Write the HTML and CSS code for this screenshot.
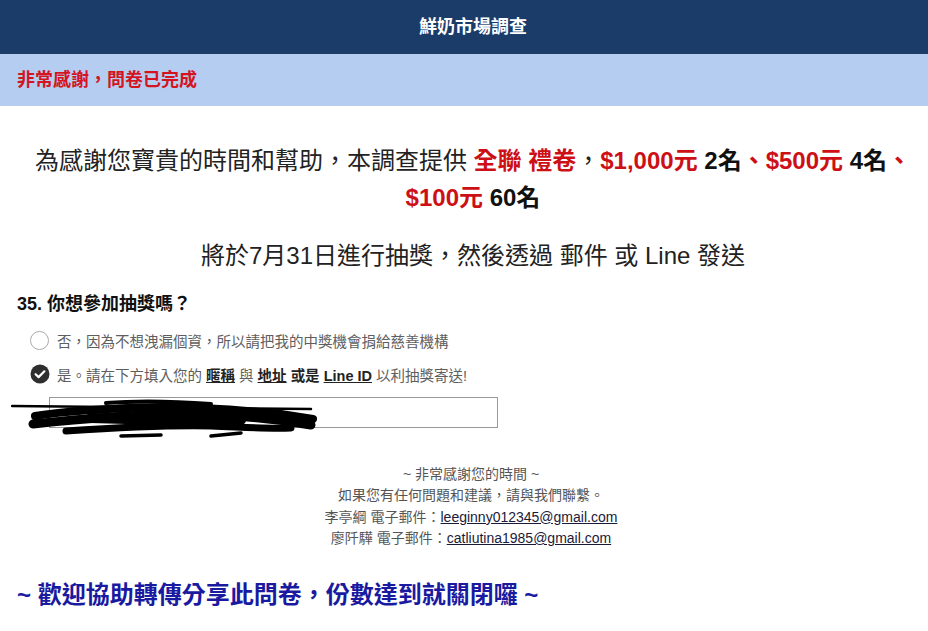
FILE: index.html
```html
<!DOCTYPE html>
<html lang="zh-TW">
<head>
    <meta charset="UTF-8">
    <meta name="viewport" content="width=device-width, initial-scale=1.0">
    <title>鮮奶市場調查</title>
    <link rel="stylesheet" href="styles.css">
</head>
<body>

    <div class="top-bar">鮮奶市場調查</div>

    <div class="done-banner">非常感謝，問卷已完成</div>

    <div class="intro">
        <p class="intro-line">為感謝您寶貴的時間和幫助，本調查提供 <b class="red">全聯 禮卷</b>，<b class="red">$1,000元</b> <b>2名</b><b class="red">、$500元</b> <b>4名</b><b class="red">、</b><br><b class="red">$100元</b> <b>60名</b></p>
        <p class="intro-line second">將於7月31日進行抽獎，然後透過 郵件 或 Line 發送</p>
    </div>

    <div class="question">
        <div class="question-title">35. 你想參加抽獎嗎？</div>

        <div class="option">
            <span class="radio"></span>
            <span>否，因為不想洩漏個資，所以請把我的中獎機會捐給慈善機構</span>
        </div>

        <div class="option">
            <svg class="radio-checked" width="20" height="20" viewBox="0 0 20 20">
                <circle cx="10" cy="10" r="9.5" fill="#2f2f2f"/>
                <path d="M5.6 10.2 L8.6 13.1 L14.4 7.3" fill="none" stroke="#fff" stroke-width="2.2" stroke-linecap="round" stroke-linejoin="round"/>
            </svg>
            <span>是。請在下方填入您的 <b class="mark">暱稱</b> 與 <b class="mark">地址</b> <b>或是</b> <b class="mark">Line ID</b> 以利抽獎寄送!</span>
        </div>

        <div class="answer-wrap">
            <input class="answer" type="text">
            <svg class="scribble" width="310" height="42" viewBox="0 0 310 42">
                <path d="M1 8 L300 11" stroke="#000" stroke-width="2.5" fill="none" stroke-linecap="round"/>
                <path d="M24 18 C60 12 110 10 150 9 C190 9 230 12 270 16 L302 21" stroke="#000" stroke-width="8" fill="none" stroke-linecap="round"/>
                <path d="M22 26 C60 22 110 17 160 16 C210 16 260 20 300 27" stroke="#000" stroke-width="9" fill="none" stroke-linecap="round"/>
                <path d="M55 33 C100 30 150 27 200 28 C230 29 255 31 280 30" stroke="#000" stroke-width="7" fill="none" stroke-linecap="round"/>
                <path d="M95 5 C120 3 160 3 200 6" stroke="#000" stroke-width="4" fill="none" stroke-linecap="round"/>
                <path d="M110 38 L150 37 M200 38 L230 35" stroke="#000" stroke-width="3.5" fill="none" stroke-linecap="round"/>
                <path d="M80 20 L150 22 L230 22" stroke="#000" stroke-width="10" fill="none" stroke-linecap="round"/>
            </svg>
        </div>
    </div>

    <div class="thanks">
        <div>~ 非常感謝您的時間 ~</div>
        <div>如果您有任何問題和建議，請與我們聯繫。</div>
        <div>李亭綱 電子郵件：<a href="#">leeginny012345@gmail.com</a></div>
        <div>廖阡驊 電子郵件：<a href="#">catliutina1985@gmail.com</a></div>
    </div>

    <div class="share">~ 歡迎協助轉傳分享此問卷，份數達到就關閉囉 ~</div>

</body>
</html>
```

FILE: styles.css
```css
html, body {
    margin: 0;
    padding: 0;
}

body {
    font-family: "Liberation Sans", "Noto Sans CJK TC", sans-serif;
    color: #222;
    background: #fff;
}

.top-bar {
    height: 54px;
    line-height: 54px;
    padding-left: 18px;
    background-color: #1b3c69;
    color: #fff;
    text-align: center;
    font-size: 18px;
    font-weight: bold;
}

.done-banner {
    height: 52px;
    line-height: 52px;
    padding-left: 17px;
    background-color: #b4cdf1;
    color: #d4141e;
    font-size: 18px;
    font-weight: bold;
}

.intro {
    padding-top: 36px;
    padding-left: 18px;
    text-align: center;
}

.intro-line {
    margin: 0;
    font-size: 24px;
    line-height: 37px;
    color: #222;
}

.intro-line b {
    color: #111;
}

.intro-line b.red {
    color: #cc1016;
}

.intro-line.second {
    margin-top: 21px;
}

.question {
    padding: 18px 17px 0;
}

.question-title {
    font-size: 18px;
    font-weight: bold;
    line-height: 24px;
    color: #111;
    margin-bottom: 7px;
}

.option {
    display: flex;
    align-items: center;
    height: 34px;
    padding-left: 13px;
    font-size: 14.5px;
    color: #5e5e5e;
}

.radio {
    width: 17px;
    height: 17px;
    border: 1.5px solid #aaa;
    border-radius: 50%;
    margin-right: 8px;
    flex-shrink: 0;
}

.radio-checked {
    margin-right: 7px;
    flex-shrink: 0;
}

.option b {
    color: #222;
}

.option b.mark {
    text-decoration: underline;
}

.answer-wrap {
    position: relative;
    margin-top: 6px;
    padding-left: 32px;
}

.answer {
    display: block;
    box-sizing: border-box;
    width: 449px;
    height: 31px;
    border: 1px solid #999;
    margin: 0;
    padding: 0 6px;
}

.scribble {
    position: absolute;
    left: -6px;
    top: 1px;
}

.thanks {
    margin-top: 36px;
    text-align: center;
    font-size: 14px;
    line-height: 21.3px;
    color: #555;
    padding-left: 14px;
}

.thanks a {
    color: #1a1a3a;
}

.share {
    margin-top: 30px;
    padding-left: 17px;
    font-size: 24px;
    line-height: 32px;
    font-weight: bold;
    color: #1a1aa0;
}
```
